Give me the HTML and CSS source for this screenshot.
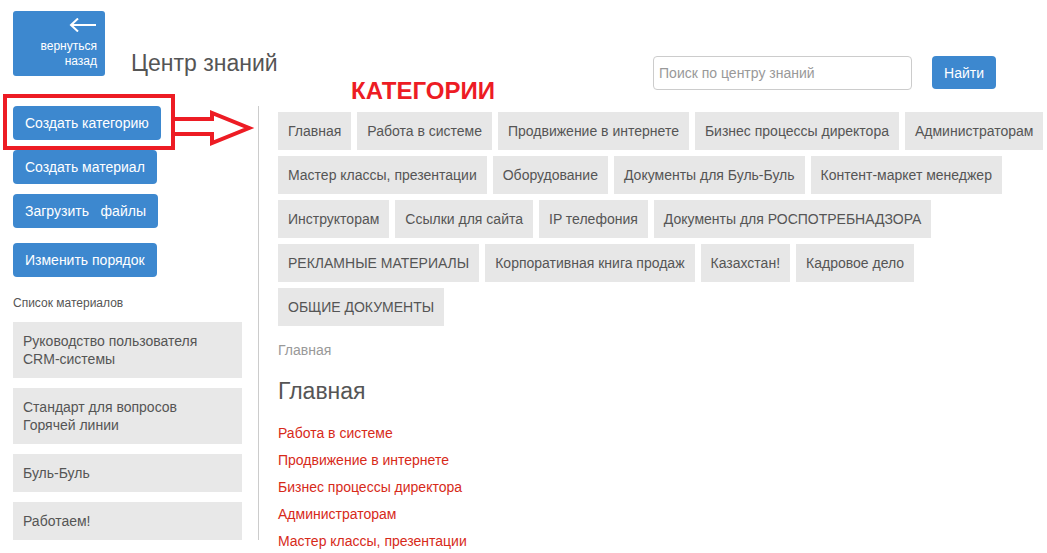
FILE: index.html
```html
<!DOCTYPE html>
<html lang="ru">
<head>
    <meta charset="UTF-8">
    <meta name="viewport" content="width=device-width, initial-scale=1.0">
    <title>Центр знаний</title>
    <link rel="stylesheet" href="styles.css">
</head>
<body>
    <div class="page">
        <header class="top">
            <a class="back" href="#">
                <svg width="28" height="14" viewBox="0 0 28 14">
                    <path d="M27 7H2M9 0.5L2 7L9 13.5" fill="none" stroke="#fff" stroke-width="2"/>
                </svg>
                <span>вернуться</span>
                <span>назад</span>
            </a>
            <h1 class="title">Центр знаний</h1>
            <form class="search" onsubmit="return false">
                <input type="text" placeholder="Поиск по центру знаний">
                <button class="btn">Найти</button>
            </form>
        </header>

        <div class="content">
            <aside class="sidebar">
                <button class="btn side-btn">Создать категорию</button>
                <button class="btn side-btn">Создать материал</button>
                <button class="btn side-btn">Загрузить&nbsp;&nbsp; файлы</button>
                <button class="btn side-btn order">Изменить порядок</button>
                <div class="list-title">Список материалов</div>
                <a class="material" href="#">Руководство пользователя CRM-системы</a>
                <a class="material" href="#">Стандарт для вопросов Горячей линии</a>
                <a class="material" href="#">Буль-Буль</a>
                <a class="material" href="#">Работаем!</a>
            </aside>

            <main class="main">
                <div class="tags">
                    <a href="#">Главная</a>
                    <a href="#">Работа в системе</a>
                    <a href="#">Продвижение в интернете</a>
                    <a href="#">Бизнес процессы директора</a>
                    <a href="#">Администраторам</a>
                    <a href="#">Мастер классы, презентации</a>
                    <a href="#">Оборудование</a>
                    <a href="#">Документы для Буль-Буль</a>
                    <a href="#">Контент-маркет менеджер</a>
                    <a href="#">Инструкторам</a>
                    <a href="#">Ссылки для сайта</a>
                    <a href="#">IP телефония</a>
                    <a href="#">Документы для РОСПОТРЕБНАДЗОРА</a>
                    <a href="#">РЕКЛАМНЫЕ МАТЕРИАЛЫ</a>
                    <a href="#">Корпоративная книга продаж</a>
                    <a href="#">Казахстан!</a>
                    <a href="#">Кадровое дело</a>
                    <a href="#">ОБЩИЕ ДОКУМЕНТЫ</a>
                </div>
                <div class="crumbs">Главная</div>
                <h2 class="heading">Главная</h2>
                <div class="links">
                    <a href="#">Работа в системе</a>
                    <a href="#">Продвижение в интернете</a>
                    <a href="#">Бизнес процессы директора</a>
                    <a href="#">Администраторам</a>
                    <a href="#">Мастер классы, презентации</a>
                </div>
            </main>
        </div>

        <!-- пометки поверх скриншота -->
        <div class="note-label">КАТЕГОРИИ</div>
        <div class="note-box"></div>
        <svg class="note-arrow" width="260" height="160" viewBox="0 0 260 160">
            <path d="M175 119H212V113L249 128L212 143V134H175" fill="#fff" stroke="#ed1c24" stroke-width="4"/>
        </svg>
    </div>
</body>
</html>
```

FILE: styles.css
```css
html, body {
    margin: 0;
    overflow: hidden;
}
body {
    font-family: "Liberation Sans", Arial, sans-serif;
    font-size: 14px;
    color: #555;
    background: #fff;
}
a {
    text-decoration: none;
}
.page {
    position: relative;
    width: 1047px;
    height: 553px;
    padding: 11px 0 0 13px;
    box-sizing: border-box;
    overflow: hidden;
}

/* шапка */
.top {
    display: flex;
    align-items: flex-start;
    height: 65px;
    padding-right: 51px;
}
.back {
    display: flex;
    flex-direction: column;
    align-items: flex-end;
    width: 92px;
    height: 65px;
    box-sizing: border-box;
    padding: 7px 8px 6px;
    background: #3d88cf;
    border-radius: 3px;
    color: #fff;
    font-size: 12px;
    line-height: 15px;
}
.back svg {
    margin-bottom: 7px;
}
.title {
    margin: 38px 0 0 26px;
    font-size: 23px;
    line-height: 28px;
    font-weight: normal;
    color: #555;
}
.search {
    display: flex;
    margin: 45px 0 0 auto;
}
.search input {
    width: 259px;
    height: 34px;
    box-sizing: border-box;
    padding: 6px 5px;
    border: 1px solid #ccc;
    border-radius: 4px;
    font-family: inherit;
    font-size: 14px;
    color: #555;
}
.search input::placeholder {
    color: #999;
}
.search .btn {
    margin-left: 20px;
    height: 33px;
    padding: 0 12px;
}
.btn {
    background: #3d88cf;
    border: 0;
    border-radius: 4px;
    color: #fff;
    font-family: inherit;
    font-size: 14px;
    line-height: 20px;
    cursor: pointer;
}

/* основная часть */
.content {
    display: flex;
    align-items: flex-start;
    margin-top: 30px;
}
.sidebar {
    display: flex;
    flex-direction: column;
    align-items: flex-start;
    width: 229px;
    padding-right: 16px;
    border-right: 1px solid #ccc;
}
.side-btn {
    padding: 7px 12px;
    margin-bottom: 10px;
}
.side-btn.order {
    margin-top: 5px;
    margin-bottom: 0;
}
.list-title {
    margin: 18px 0 11px;
    font-size: 12px;
    line-height: 16px;
    color: #555;
}
.material {
    align-self: stretch;
    padding: 10px;
    margin-bottom: 10px;
    background: #e8e8e8;
    color: #555;
    line-height: 18px;
}
.material:last-child {
    margin-bottom: 0;
}

.main {
    flex: 1;
    min-width: 0;
    padding: 6px 0 0 19px;
}
.tags {
    display: flex;
    flex-wrap: wrap;
    gap: 6px;
    width: 790px;
}
.tags a {
    padding: 9px 10px;
    line-height: 20px;
    background: #e7e7e7;
    color: #555;
}
.crumbs {
    margin-top: 14px;
    line-height: 20px;
    color: #999;
}
.heading {
    margin: 17px 0 0;
    font-size: 23px;
    line-height: 28px;
    font-weight: normal;
    color: #555;
}
.links {
    display: flex;
    flex-direction: column;
    align-items: flex-start;
    margin-top: 15px;
}
.links a {
    line-height: 27px;
    color: #d72a1a;
}

/* красные пометки */
.note-label {
    position: absolute;
    left: 351px;
    top: 79px;
    font-size: 24px;
    line-height: 24px;
    font-weight: bold;
    color: #ed1c24;
}
.note-box {
    position: absolute;
    left: 3px;
    top: 94px;
    width: 172px;
    height: 56px;
    box-sizing: border-box;
    border: 4px solid #ed1c24;
}
.note-arrow {
    position: absolute;
    left: 0;
    top: 0;
}
```
